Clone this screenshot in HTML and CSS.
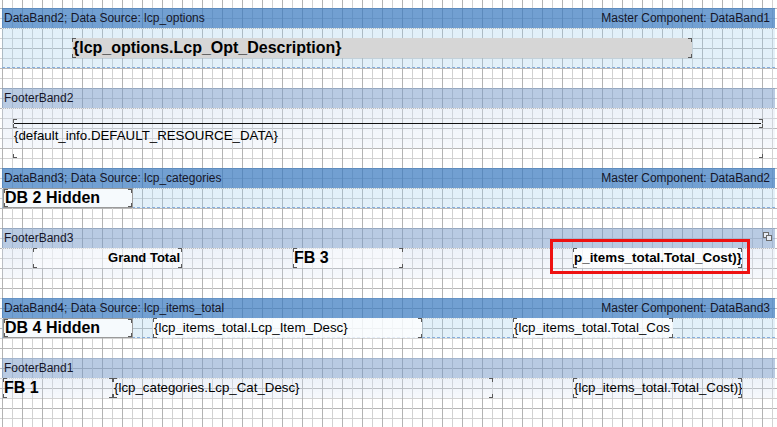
FILE: index.html
```html
<!DOCTYPE html>
<html>
<head>
<meta charset="utf-8">
<link rel="stylesheet" href="styles.css">
</head>
<body>
<div class="page">
  <section class="band">
    <div class="hdr data-hdr"><span>DataBand2; Data Source: lcp_options</span><span>Master Component: DataBand1</span></div>
    <div class="bd data-bd h40">
      <div class="cmp gray c-opt">{lcp_options.Lcp_Opt_Description}</div>
    </div>
  </section>
  <div class="gap"></div>

  <section class="band">
    <div class="hdr foot-hdr"><span>FooterBand2</span></div>
    <div class="bd foot-bd h40">
      <div class="cmp c-line"><div class="rule"></div></div>
      <div class="cmp c-def">{default_info.DEFAULT_RESOURCE_DATA}</div>
    </div>
  </section>
  <div class="gap"></div>

  <section class="band">
    <div class="hdr data-hdr"><span>DataBand3; Data Source: lcp_categories</span><span>Master Component: DataBand2</span></div>
    <div class="bd data-bd h20">
      <div class="cmp hidden c-db2">DB 2 Hidden</div>
    </div>
  </section>
  <div class="gap"></div>

  <section class="band">
    <div class="hdr foot-hdr"><span>FooterBand3</span>
      <svg class="copy" width="9" height="9" viewBox="0 0 9 9"><rect x="0.5" y="0.5" width="5" height="5" fill="#e9eef6" stroke="#6c6c6c"/><rect x="3.5" y="3.5" width="5" height="5" fill="#e9eef6" stroke="#6c6c6c"/></svg>
    </div>
    <div class="bd foot-bd h30">
      <div class="cmp soft bold13 right c-gt">Grand Total</div>
      <div class="cmp soft bold16 c-fb3">FB 3</div>
      <div class="cmp white bold13 c-tc">p_items_total.Total_Cost)}</div>
      <div class="mark"></div>
    </div>
  </section>
  <div class="gap"></div>

  <section class="band">
    <div class="hdr data-hdr"><span>DataBand4; Data Source: lcp_items_total</span><span>Master Component: DataBand3</span></div>
    <div class="bd data-bd h20">
      <div class="cmp hidden c-db4">DB 4 Hidden</div>
      <div class="cmp white c-desc">{lcp_items_total.Lcp_Item_Desc}</div>
      <div class="cmp white c-cos">{lcp_items_total.Total_Cos</div>
    </div>
  </section>
  <div class="gap"></div>

  <section class="band">
    <div class="hdr foot-hdr"><span>FooterBand1</span></div>
    <div class="bd foot-bd h20">
      <div class="cmp bold16 c-fb1">FB 1</div>
      <div class="cmp c-cat">{lcp_categories.Lcp_Cat_Desc}</div>
      <div class="cmp c-cost">{lcp_items_total.Total_Cost)}</div>
    </div>
  </section>
</div>
</body>
</html>
```

FILE: styles.css
```css
html, body {
  margin: 0;
  padding: 0;
  background: #fff;
}

.page {
  width: 777px;
  height: 427px;
  overflow: hidden;
  position: relative;
  box-sizing: border-box;
  padding: 8px 2px 0 2px;
  display: flex;
  flex-direction: column;
  font-family: "Liberation Sans", Arial, sans-serif;
  color: #000;
  background-color: #fff;
  background-image:
    linear-gradient(90deg, #b4b4b4 1px, transparent 1px),
    linear-gradient(90deg, #d2d2d2 1px, transparent 1px),
    linear-gradient(180deg, #b8b8b8 1px, transparent 1px),
    linear-gradient(180deg, #d2d2d2 1px, transparent 1px);
  background-size: 20px 20px;
  background-position: 2px 0, 12px 0, 0 8px, 0 18px;
}

.band {
  width: 773px;
  display: flex;
  flex-direction: column;
}

.gap {
  height: 20px;
  flex: none;
}

.hdr {
  height: 20px;
  flex: none;
  display: flex;
  align-items: center;
  justify-content: space-between;
  padding: 0 5px 0 2px;
  box-sizing: border-box;
  font-size: 12px;
  line-height: 20px;
  color: #161628;
  position: relative;
}

.data-hdr {
  background: rgba(54, 119, 191, 0.7);
}

.foot-hdr {
  background: rgba(115, 151, 199, 0.5);
}

.copy {
  position: absolute;
  right: 3px;
  top: 4px;
}

.bd {
  position: relative;
  flex: none;
  box-sizing: border-box;
  border-top: 1px dotted rgba(255, 255, 255, 0.7);
}

.h20 { height: 20px; }
.h30 { height: 30px; }
.h40 { height: 40px; }

.data-bd {
  background: rgba(158, 205, 235, 0.3);
  border-bottom: 1px dashed #86aedb;
}

.foot-bd {
  background: linear-gradient(rgba(205, 218, 238, 0.36), rgba(205, 218, 238, 0.18));
}

/* components on the band canvas */
.cmp {
  position: absolute;
  box-sizing: border-box;
  height: 20px;
  top: -1px;
  font-size: 13.3px;
  line-height: 20px;
  white-space: nowrap;
  overflow: hidden;
  padding: 0 2px 0 1px;
}

.cmp::before {
  content: "";
  position: absolute;
  inset: 0;
  pointer-events: none;
  background:
    linear-gradient(#5a5a5a, #5a5a5a) left top / 4px 1px no-repeat,
    linear-gradient(#5a5a5a, #5a5a5a) left top / 1px 4px no-repeat,
    linear-gradient(#5a5a5a, #5a5a5a) right top / 4px 1px no-repeat,
    linear-gradient(#5a5a5a, #5a5a5a) right top / 1px 4px no-repeat,
    linear-gradient(#5a5a5a, #5a5a5a) left bottom / 4px 1px no-repeat,
    linear-gradient(#5a5a5a, #5a5a5a) left bottom / 1px 4px no-repeat,
    linear-gradient(#5a5a5a, #5a5a5a) right bottom / 4px 1px no-repeat,
    linear-gradient(#5a5a5a, #5a5a5a) right bottom / 1px 4px no-repeat;
}

.gray {
  background: #d6d6d6;
  font-size: 16px;
  font-weight: bold;
}

.hidden {
  background: #f6fafd;
  border: 1px solid #9a9a9a;
  font-size: 16px;
  font-weight: bold;
  line-height: 18px;
  padding-left: 1px;
}

.soft { background: rgba(255, 255, 255, 0.45); }
.white { background: rgba(255, 255, 255, 0.78); }

.bold13 { font-size: 13px; font-weight: bold; }
.bold16 { font-size: 16px; font-weight: bold; }
.right { text-align: right; }

.c-opt { left: 70px; top: 9px; width: 620px; }

.c-line { left: 11px; top: 10px; width: 750px; height: 9px; }
.rule {
  margin-top: 4px;
  height: 1px;
  background: #111;
}
.c-def { left: 11px; top: 10px; width: 750px; height: 39px; padding-top: 7px; }

.c-db2 { left: 1px; width: 130px; }
.c-db4 { left: 1px; width: 130px; }

.c-gt { left: 31px; width: 149px; }
.c-fb3 { left: 291px; width: 110px; }
.c-tc { left: 571px; width: 169px; text-align: right; font-size: 13.4px; padding-right: 3px; }

.mark {
  position: absolute;
  left: 548px;
  top: -10px;
  width: 200px;
  height: 35px;
  box-sizing: border-box;
  border: 3px solid #ee1111;
  z-index: 2;
}

.c-desc { left: 151px; width: 269px; }
.c-cos { left: 511px; width: 160px; }

.c-fb1 { left: 1px; width: 110px; }
.c-cat { left: 111px; width: 380px; }
.c-cost { left: 571px; width: 169px; }
```
